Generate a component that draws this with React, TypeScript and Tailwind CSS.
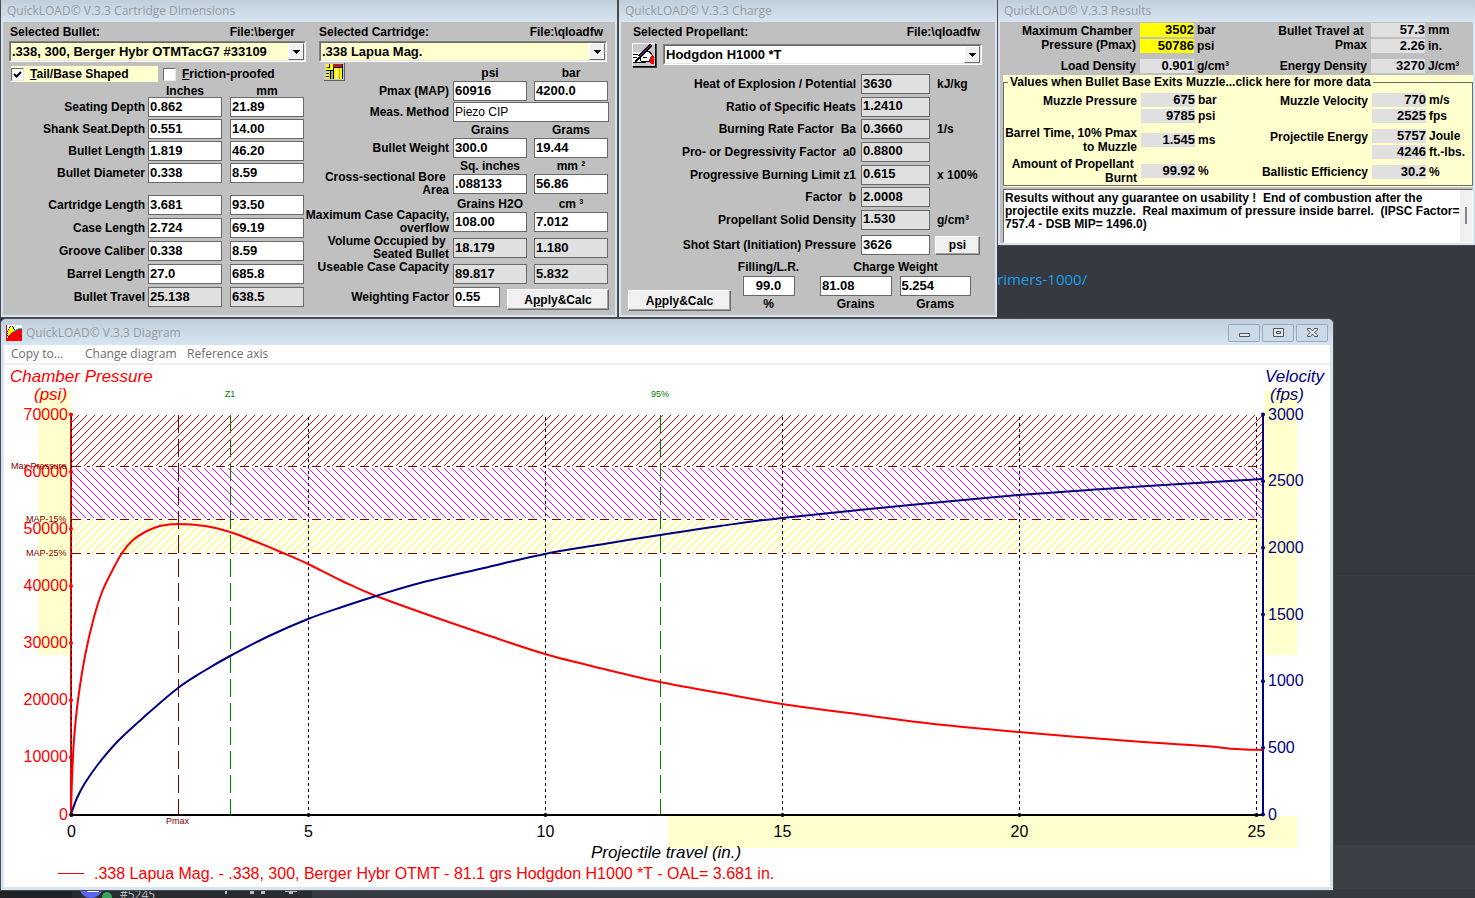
import { ReactNode, useState } from 'react';

const sans = 'font-["Liberation_Sans",Arial,sans-serif]';
const ui = 'font-["Open_Sans","Noto_Sans",sans-serif]';

interface FieldProps {
  id?: string;
  label?: string;
  value: string;
  locked?: boolean;
  className?: string;
}

const Field = ({ id, label, value, locked, className = '' }: FieldProps) => (
  <input
    id={id}
    type="text"
    aria-label={label}
    defaultValue={value}
    readOnly={locked}
    className={`h-5 w-full min-w-0 border border-[#696969] px-px pb-0.5 text-[13px] leading-4 font-bold outline-none ${
      locked ? 'bg-[#e0e0e0]' : 'bg-white'
    } ${className}`}
  />
);

const Window = ({
  title,
  className = '',
  children,
}: {
  title: string;
  className?: string;
  children: ReactNode;
}) => (
  <section className={`flex flex-col border border-t-0 border-[#4b4b4f] bg-[#d7e4f2] px-0.5 pb-0.5 ${className}`}>
    <h2
      className={`${ui} -mx-0.5 flex h-[22px] items-center bg-linear-to-b from-[#c0cedc] to-[#d7e4f1] px-1.5 text-xs font-normal text-[#969ba1]`}
    >
      {title}
    </h2>
    <div className="flex-1 bg-[#c0c0c0]">{children}</div>
  </section>
);

const Combo = ({ label, options, className }: { label: string; options: string[]; className: string }) => (
  <div className={`relative border border-r-white border-b-white border-t-[#808080] border-l-[#808080] ${className}`}>
    <select
      aria-label={label}
      className="block h-[19px] w-full appearance-none border border-[#696969] border-r-[#e3e3e3] border-b-[#e3e3e3] bg-transparent pr-5 pl-px text-[13px] leading-4 font-bold outline-none"
    >
      {options.map((option) => (
        <option key={option}>{option}</option>
      ))}
    </select>
    <span className="pointer-events-none absolute top-px right-px bottom-px flex w-4 items-center justify-center border border-white border-r-[#696969] border-b-[#696969] bg-[#f0f0f0]">
      <svg width="7" height="4" viewBox="0 0 7 4" shapeRendering="crispEdges">
        <path d="M0 0h7L3.500 4z" />
      </svg>
    </span>
  </div>
);

const Check = ({ id, checked, children }: { id: string; checked?: boolean; children: ReactNode }) => (
  <div className="flex items-center gap-1.5">
    <span className="grid size-[13px] place-items-center">
      <input
        id={id}
        type="checkbox"
        defaultChecked={checked}
        className="peer col-start-1 row-start-1 size-[13px] appearance-none border border-[#696969] border-r-[#e8e8e8] border-b-[#e8e8e8] bg-white"
      />
      <svg
        className="pointer-events-none invisible col-start-1 row-start-1 peer-checked:visible"
        width="9"
        height="9"
        viewBox="0 0 9 9"
      >
        <path d="M1 4l2.500 2.500L8 2" fill="none" stroke="#000" strokeWidth="2" />
      </svg>
    </span>
    <label htmlFor={id}>{children}</label>
  </div>
);

const PushButton = ({ className = '', children }: { className?: string; children: ReactNode }) => (
  <button
    type="button"
    className={`border border-white border-r-[#696969] border-b-[#696969] bg-[#f0f0f0] text-xs leading-4 font-bold shadow-[inset_-1px_-1px_0_#a0a0a0] ${className}`}
  >
    {children}
  </button>
);

/* ---------- Cartridge dimensions ---------- */

const bulletRows = [
  ['Seating Depth', '0.862', '21.89'],
  ['Shank Seat.Depth', '0.551', '14.00'],
  ['Bullet Length', '1.819', '46.20'],
  ['Bullet Diameter', '0.338', '8.59'],
];

const barrelRows = [
  ['Cartridge Length', '3.681', '93.50'],
  ['Case Length', '2.724', '69.19'],
  ['Groove Caliber', '0.338', '8.59'],
  ['Barrel Length', '27.0', '685.8'],
  ['Bullet Travel', '25.138', '638.5'],
];

const DimensionRow = ({ row }: { row: string[] }) => {
  const [label, inches, mm] = row;
  const id = label.toLowerCase().replace(/\W+/g, '-');
  const locked = label === 'Bullet Travel';
  return (
    <div className="grid grid-cols-[136px_74px_74px] items-center gap-x-2">
      <label htmlFor={id} className="-mr-[5px] text-right">
        {label}
      </label>
      <Field id={id} value={inches} locked={locked} />
      <Field label={`${label} mm`} value={mm} locked={locked} />
    </div>
  );
};

const Units = ({ left, right, icon }: { left: string; right: string; icon?: ReactNode }) => (
  <div className="grid h-4 grid-cols-[minmax(0,1fr)_74px_74px] items-center gap-x-[7px] pr-px text-center whitespace-pre">
    <div className="h-4 pl-[5px] text-left">{icon}</div>
    <span>{left}</span>
    <span>{right}</span>
  </div>
);

const CaseRow = ({
  id,
  label,
  values,
  locked,
  className = '',
}: {
  id: string;
  label: string;
  values: string[];
  locked?: boolean;
  className?: string;
}) => (
  <div
    className={`grid grid-cols-[minmax(0,1fr)_74px_74px] grid-rows-[20px] items-center gap-x-[7px] pr-px ${className}`}
  >
    <label htmlFor={id} className="-mr-[3px] flex justify-end text-right leading-[13px] whitespace-pre">
      {label}
    </label>
    <Field id={id} value={values[0]} locked={locked} />
    <Field label={`${label} metric`} value={values[1]} locked={locked} />
  </div>
);

const CartridgeIcon = () => (
  <svg width="21" height="18" viewBox="0 0 21 18" shapeRendering="crispEdges">
    <path d="M0 0h21v18H0z" fill="#c8c8c8" />
    <path d="M0 17.500h20.500V0" fill="none" stroke="#606060" />
    <path d="M2 1h7v6H2zM2 9h3v7H2zM10 5h8v11h-8z" fill="#ff0" />
    <path d="M9 1h9v3H9z" fill="#b02030" />
    <path d="M5 1v3M3 4h3M9 4.500h9M2 7.500h8M9.500 5v11M18.500 1v15M2 10.500h3M2 13.500h3M6.500 8v8" fill="none" stroke="#000" />
    <path d="M7 8h2v8H7z" fill="#a0a0a0" />
    <path d="M12 6h1v10h-1z" fill="#fff" />
    <path d="M15 5h1v11h-1z" fill="#d0a000" />
  </svg>
);

const CartridgeWindow = () => (
  <Window title="QuickLOAD© V.3.3 Cartridge Dimensions" className="w-[618px] shrink-0">
    <div className="flex gap-[13px] pt-px pr-1.5 pl-1.5">
      <div className="w-[297px]">
        <div className="flex h-[18px] items-center justify-between pr-[11px] pl-px">
          <span>Selected Bullet:</span>
          <span>File:\berger</span>
        </div>
        <Combo
          label="Selected Bullet"
          options={['.338, 300, Berger Hybr OTMTacG7 #33109']}
          className="bg-[#ffffce]"
        />
        <div className="mt-1 flex h-4 gap-[5px] pl-0.5">
          <div className="flex w-[147px] items-center bg-[#ffffce]">
            <Check id="tail" checked>
              <u>T</u>ail/Base Shaped
            </Check>
          </div>
          <Check id="friction">
            <u>F</u>riction-proofed
          </Check>
        </div>
        <div className="-ml-[5px]">
          <div className="mt-px grid h-[14px] grid-cols-[136px_74px_74px] items-center gap-x-2 text-center">
            <span />
            <span>Inches</span>
            <span>mm</span>
          </div>
          <div className="space-y-0.5">
            {bulletRows.map((row) => (
              <DimensionRow key={row[0]} row={row} />
            ))}
          </div>
          <div className="mt-3 space-y-[3px]">
            {barrelRows.map((row) => (
              <DimensionRow key={row[0]} row={row} />
            ))}
          </div>
        </div>
      </div>

      <div className="min-w-0 flex-1">
        <div className="flex h-[18px] items-center justify-between pr-1.5">
          <span>Selected Cartridge:</span>
          <span>File:\qloadfw</span>
        </div>
        <Combo label="Selected Cartridge" options={['.338 Lapua Mag.']} className="mr-0.5 bg-[#ffffce]" />
        <div className="pt-[3px]">
          <Units
            left="psi"
            right="bar"
            icon={
              <button type="button" aria-label="Cartridge drawing" className="-mt-0.5 block">
                <CartridgeIcon />
              </button>
            }
          />
        </div>
        <CaseRow id="pmax" label="Pmax (MAP)" values={['60916', '4200.0']} />
        <div className="mt-px grid grid-cols-[1fr_156px] items-center gap-x-1">
          <label htmlFor="method" className="text-right">
            Meas. Method
          </label>
          <input
            id="method"
            type="text"
            defaultValue="Piezo CIP"
            className="h-5 w-full border border-[#696969] bg-white px-px text-xs font-normal outline-none"
          />
        </div>
        <Units left="Grains" right="Grams" />
        <CaseRow id="weight" label="Bullet Weight" values={['300.0', '19.44']} />
        <Units left="Sq. inches" right="mm ²" />
        <CaseRow id="bore" label={'Cross-sectional Bore \nArea'} values={['.088133', '56.86']} />
        <div className="pt-0.5">
          <Units left="Grains H2O" right="cm ³" />
        </div>
        <CaseRow id="capacity" label={'Maximum Case Capacity,\noverflow'} values={['108.00', '7.012']} />
        <CaseRow
          id="volume"
          label={'Volume Occupied by \nSeated Bullet'}
          values={['18.179', '1.180']}
          locked
          className="mt-1.5"
        />
        <CaseRow
          id="useable"
          label={'Useable Case Capacity\n '}
          values={['89.817', '5.832']}
          locked
          className="mt-1.5"
        />
        <div className="mt-[3px] grid grid-cols-[minmax(0,1fr)_47px_102px] items-start gap-x-[7px]">
          <label htmlFor="factor" className="-mr-[3px] text-right leading-5">
            Weighting Factor
          </label>
          <Field id="factor" value="0.55" />
          <PushButton className="mt-0.5 h-[21px]">
            A<u>p</u>ply&amp;Calc
          </PushButton>
        </div>
      </div>
    </div>
  </Window>
);

/* ---------- Charge ---------- */

const propellantRows = [
  ['Heat of Explosion / Potential', '3630', 'kJ/kg'],
  ['Ratio of Specific Heats', '1.2410', ''],
  ['Burning Rate Factor  Ba', '0.3660', '1/s'],
  ['Pro- or Degressivity Factor  a0', '0.8800', ''],
  ['Progressive Burning Limit z1', '0.615', 'x 100%'],
  ['Factor  b', '2.0008', ''],
  ['Propellant Solid Density', '1.530', 'g/cm³'],
];

const NotesIcon = () => (
  <svg width="22" height="22" viewBox="0 0 22 22" shapeRendering="crispEdges">
    <path d="M0 0h22v22H0z" fill="#c8c8c8" />
    <path d="M0 8h8v10H0z" fill="#fff" />
    <path d="M6 12l5-5h5l3 4v6H8z" fill="#fff" stroke="#000" />
    <path d="M18 12h3v8h-3l-2-4z" fill="#f00000" />
    <path d="M0 10.500h5M0 13.500h4M0 18.500h13M10 13.500h4" fill="none" stroke="#000" />
    <path d="M2 18l5-5" stroke="#000" strokeWidth="2" />
    <path d="M6 13L18 1" stroke="#000" strokeWidth="3" />
    <path d="M6 13L18 1" stroke="#c000c0" strokeWidth="1" />
  </svg>
);

const ChargeWindow = () => (
  <Window title="QuickLOAD© V.3.3 Charge" className="w-[379px] shrink-0 border-r-0">
    <div className="pt-px pb-[3px] pl-[7px]">
      <div className="flex h-[18px] items-center justify-between pr-[15px] pl-[5px]">
        <span>Selected Propellant:</span>
        <span>File:\qloadfw</span>
      </div>
      <div className="mt-0.5 flex items-start gap-[7px] pr-[13px] pl-1">
        <button
          type="button"
          aria-label="Propellant notes"
          className="border border-white border-r-black border-b-black shadow-[1px_1px_0_#404040]"
        >
          <NotesIcon />
        </button>
        <Combo label="Selected Propellant" options={['Hodgdon H1000 *T']} className="mt-px flex-1 bg-white" />
      </div>
      <div className="mt-[7px] flex h-[156px] flex-col justify-between">
        {propellantRows.map(([label, value, unit], i) => (
          <div key={label} className="grid grid-cols-[228px_69px_1fr] items-center gap-x-[5px] whitespace-pre">
            <label htmlFor={`prop-${i}`} className="text-right">
              {label}
            </label>
            <Field id={`prop-${i}`} value={value} locked />
            <span className="pl-0.5">{unit}</span>
          </div>
        ))}
      </div>
      <div className="mt-[5px] grid grid-cols-[228px_69px_45px] items-center gap-x-[5px]">
        <label htmlFor="shot-start" className="text-right">
          Shot Start (Initiation) Pressure
        </label>
        <Field id="shot-start" value="3626" />
        <PushButton className="h-[19px]">psi</PushButton>
      </div>
      <div className="mt-1 flex">
        <PushButton className="mt-[31px] h-[21px] w-[103px]">
          A<u>p</u>ply&amp;Calc
        </PushButton>
        <div className="flex w-[75px] flex-col items-center">
          <label htmlFor="filling" className="leading-[17px]">
            Filling/L.R.
          </label>
          <div className="w-[52px]">
            <Field id="filling" value="99.0" className="text-center" />
          </div>
          <span className="leading-4">%</span>
        </div>
        <div className="ml-3.5 w-[151px] text-center">
          <div className="leading-[17px]">Charge Weight</div>
          <div className="grid grid-cols-2 gap-x-2">
            <Field id="charge-grains" value="81.08" />
            <Field id="charge-grams" value="5.254" />
            <label htmlFor="charge-grains" className="leading-4">
              Grains
            </label>
            <label htmlFor="charge-grams" className="leading-4">
              Grams
            </label>
          </div>
        </div>
      </div>
    </div>
  </Window>
);

/* ---------- Results ---------- */

const Metric = ({
  label,
  readings,
  highlight,
}: {
  label: string;
  readings: string[][];
  highlight?: boolean;
}) => (
  <div className={`flex justify-end gap-1 ${readings.length > 1 ? 'items-start' : 'items-center'}`}>
    <span className={`flex-1 text-right leading-[14px] whitespace-pre ${readings.length > 1 ? 'pt-px' : ''}`}>
      {label}
    </span>
    <div className="space-y-0.5">
      {readings.map(([value, unit]) => (
        <div key={unit} className="flex h-3.5 gap-[3px]">
          <output
            className={`w-[54px] text-right text-[13px] leading-3.5 ${highlight ? 'bg-[#ffff00]' : 'bg-[#e0e0e0]'}`}
          >
            {value}
          </output>
          <span className="w-[41px] leading-3.5 whitespace-nowrap">{unit}</span>
        </div>
      ))}
    </div>
  </div>
);

const notice =
  'Results without any guarantee on usability !  End of combustion after the\n' +
  'projectile exits muzzle.  Real maximum of pressure inside barrel.  (IPSC Factor=\n' +
  '757.4 - DSB MIP= 1496.0)';

const ResultsWindow = () => (
  <Window title="QuickLOAD© V.3.3 Results" className="border-r-0">
    <div className="pl-[3px]">
      <div className="flex pt-px pb-0.5">
        <div className="w-[235px] space-y-1.5">
          <Metric
            label={'Maximum Chamber \nPressure (Pmax)'}
            readings={[
              ['3502', 'bar'],
              ['50786', 'psi'],
            ]}
            highlight
          />
          <Metric label="Load Density" readings={[['0.901', 'g/cm³']]} />
        </div>
        <div className="flex-1 space-y-1.5 pr-1">
          <Metric
            label={'Bullet Travel at \nPmax'}
            readings={[
              ['57.3', 'mm'],
              ['2.26', 'in.'],
            ]}
          />
          <Metric label="Energy Density" readings={[['3270', 'J/cm³']]} />
        </div>
      </div>
      <div className="bg-[#ffffce] pb-px">
        <fieldset className="flex border border-[#696969] pt-1">
          <legend className="ml-1 px-0.5">
            <button type="button" className="block text-xs leading-3.5 font-bold">
              Values when Bullet Base Exits Muzzle...click here for more data
            </button>
          </legend>
          <div className="w-[235px] space-y-[3px]">
            <Metric
              label="Muzzle Pressure"
              readings={[
                ['675', 'bar'],
                ['9785', 'psi'],
              ]}
            />
            <Metric label={'Barrel Time, 10% Pmax\nto Muzzle'} readings={[['1.545', 'ms']]} />
            <Metric label={'Amount of Propellant \nBurnt'} readings={[['99.92', '%']]} />
          </div>
          <div className="flex-1 space-y-1.5 pr-0.5">
            <Metric
              label="Muzzle Velocity"
              readings={[
                ['770', 'm/s'],
                ['2525', 'fps'],
              ]}
            />
            <Metric
              label="Projectile Energy"
              readings={[
                ['5757', 'Joule'],
                ['4246', 'ft.-lbs.'],
              ]}
            />
            <Metric label="Ballistic Efficiency" readings={[['30.2', '%']]} />
          </div>
        </fieldset>
      </div>
      <div className="mt-0.5 flex h-[54px] border border-[#696969] border-r-white border-b-white bg-white">
        <textarea
          aria-label="Notice"
          readOnly
          defaultValue={notice}
          className="min-w-0 flex-1 resize-none overflow-hidden py-0.5 pl-px text-xs leading-[13px] font-bold whitespace-pre outline-none"
        />
        <div className="flex w-3 justify-center bg-[#f0f0f0] pt-[17px]">
          <div className="h-[17px] w-0.5 bg-[#858585]" />
        </div>
      </div>
    </div>
  </Window>
);

/* ---------- Diagram ---------- */

const X0 = 67.5;
const Y0 = 449.5;
const xAt = (inch: number) => X0 + inch * 47.4;
const psiAt = (psi: number) => Y0 - (psi * 400) / 70000;
const fpsAt = (fps: number) => Y0 - (fps * 400) / 3000;

const pressure = [
  [67, 449], [68, 415], [70, 375], [74, 335], [81, 291], [90, 252], [98, 227], [106, 210], [118, 188],
  [129, 175], [143, 166], [156, 161], [174, 159], [201, 161], [226, 167], [250, 176], [279, 188], [304, 199],
  [338, 216], [372, 231], [436, 254], [480, 269], [541, 289], [600, 304], [656, 317], [716, 328], [778, 339],
  [860, 350], [930, 359], [1015, 367], [1126, 376], [1200, 381], [1232, 384], [1259, 385],
];

const velocity = [
  [67, 449], [73, 433], [81, 418], [95, 398], [115, 375], [140, 352], [174, 323], [200, 306], [226, 291],
  [265, 271], [304, 254], [338, 242], [372, 231], [416, 218], [480, 203], [541, 189], [600, 179], [656, 170],
  [716, 161], [778, 153], [896, 141], [1015, 130], [1100, 124], [1176, 119], [1259, 114],
];

// Catmull-Rom spline through the sampled points
const curve = (pts: number[][]) =>
  pts.slice(0, -1).reduce((d, p, i) => {
    const a = pts[i - 1] ?? p;
    const q = pts[i + 1];
    const b = pts[i + 2] ?? q;
    return `${d}C${p[0] + (q[0] - a[0]) / 6} ${p[1] + (q[1] - a[1]) / 6} ${q[0] - (b[0] - p[0]) / 6} ${
      q[1] - (b[1] - p[1]) / 6
    } ${q[0]} ${q[1]}`;
  }, `M${pts[0][0]} ${pts[0][1]}`);

// 45° hatching between two heights, clipped to the plot's left and right edges
const hatch = (top: number, bottom: number, rising: boolean) => {
  const h = bottom - top;
  let d = '';
  for (let x = 72 - Math.ceil(h / 8) * 8; x < 1258; x += 8) {
    const from = Math.max(0, 68 - x);
    const to = Math.min(h, 1258 - x);
    if (to <= from) continue;
    d += rising
      ? `M${x + from} ${bottom - from}L${x + to} ${bottom - to}`
      : `M${x + from} ${top + from}L${x + to} ${top + to}`;
  }
  return d;
};

const Diagram = () => (
  <svg viewBox="0 0 1326 522" className={`${sans} block h-auto w-full bg-white text-[16px]`}>
    <g fill="#ffffce">
      <path d="M34 26h33v264H34zM1260 26h33v264h-33zM664 451h629v32H664z" />
    </g>

    <g shapeRendering="crispEdges">
      <path d={hatch(50, 101, true)} stroke="#f00000" />
      <path d={hatch(103, 153, false)} stroke="#ff00ff" />
      <path d={hatch(155, 188, true)} stroke="#ffff00" />
      <g stroke="#800000" strokeDasharray="9 6 3 6">
        <path d="M68 101.500H1252M68 154.500H1252M68 188.500H1252" />
      </g>
      <g stroke="#000" strokeDasharray="3 3">
        {[5, 10, 15, 20, 25].map((inch) => (
          <path key={inch} d={`M${xAt(inch)} 52V449`} />
        ))}
      </g>
      <path d="M174.500 50V449" stroke="#800000" strokeDasharray="18 6" />
      <path d="M226.500 50V449M656.500 50V449" stroke="#008000" strokeDasharray="18 6" />
      <path d="M67 49V450" stroke="#f00" strokeWidth="2" />
      <path d="M67.500 52V449" stroke="#000" strokeDasharray="3 3" />
      <path d="M67 450H1260" stroke="#000" strokeWidth="2" />
      <path d="M1259 49V450" stroke="#000080" strokeWidth="2" />
    </g>

    <path d={curve(pressure)} fill="none" stroke="#f00" strokeWidth="2" />
    <path d={curve(velocity)} fill="none" stroke="#000080" strokeWidth="2" />

    <g fill="#f00" textAnchor="end">
      {[0, 10000, 20000, 30000, 40000, 50000, 60000, 70000].map((psi) => (
        <g key={psi}>
          <text x="64" y={psiAt(psi) + 5}>
            {psi}
          </text>
          <circle cx="67" cy={psiAt(psi)} r="2" />
        </g>
      ))}
    </g>
    <g fill="#000080">
      {[0, 500, 1000, 1500, 2000, 2500, 3000].map((fps) => (
        <g key={fps}>
          <text x="1264" y={fpsAt(fps) + 5}>
            {fps}
          </text>
          <circle cx="1259" cy={fpsAt(fps)} r="2" />
        </g>
      ))}
    </g>
    <g textAnchor="middle">
      {[0, 5, 10, 15, 20, 25].map((inch) => (
        <g key={inch}>
          <text x={xAt(inch)} y="472">
            {inch}
          </text>
          <circle cx={xAt(inch)} cy="450" r="2" />
        </g>
      ))}
    </g>

    <g fontStyle="italic" fontSize="17">
      <g fill="#f00">
        <text x="6" y="17">Chamber Pressure</text>
        <text x="30" y="35">(psi)</text>
      </g>
      <g fill="#000080">
        <text x="1261" y="17">Velocity</text>
        <text x="1266" y="35">(fps)</text>
      </g>
      <text x="587" y="493">Projectile travel (in.)</text>
    </g>

    <g fontSize="9">
      <g fill="#800000">
        <text x="7" y="104">Max Pressure</text>
        <text x="22" y="157">MAP-15%</text>
        <text x="22" y="191">MAP-25%</text>
        <text x="162" y="459">Pmax</text>
      </g>
      <g fill="#008000" textAnchor="middle">
        <text x="226" y="32">Z1</text>
        <text x="656" y="32">95%</text>
      </g>
    </g>

    <path d="M54 508.500H80" stroke="#f00" shapeRendering="crispEdges" />
    <text x="90" y="514" fill="#f00">
      .338 Lapua Mag. - .338, 300, Berger Hybr OTMT - 81.1 grs Hodgdon H1000 *T - OAL= 3.681 in.
    </text>
  </svg>
);

const captionButtons = [
  { label: 'Minimize', shape: <path d="M3.500 6.500h10v3h-10z" /> },
  { label: 'Restore', shape: <path d="M3.500 1.500h10v8h-10zM6.500 4.500h4v2h-4z" /> },
  {
    label: 'Close',
    shape: <path d="M3.500 1.500h3l2 2.500 2-2.500h3v1.500l-3 2.500 3 2.500v1.500h-3l-2-2.500-2 2.500h-3v-1.500l3-2.500-3-2.500z" />,
  },
];

const DiagramWindow = () => {
  const [menu, setMenu] = useState('');
  return (
    <section className="min-w-0 flex-1 rounded-t-md border border-[#4b4b4f] bg-[#d7e4f2] pb-[3px]">
      <header className="flex h-[26px] items-center rounded-t-md bg-linear-to-b from-[#c0cedc] to-[#d7e4f1] px-[5px] pt-px">
        <svg width="16" height="16" viewBox="0 0 16 16" shapeRendering="crispEdges">
          <path d="M0 0h16v16H0z" fill="#fff" />
          <path d="M1 11C2 5 3 1 5 1s3 4 5 6l-4 4z" fill="#ff0" stroke="#000" strokeDasharray="1 1" />
          <path d="M1 14C4 8 9 4 16 3v13H1z" fill="#f00" />
          <path d="M7 7c3-2 6-4 9-4" fill="none" stroke="#0cc" />
          <path d="M.5 0v15.500H16" fill="none" stroke="#f00" />
          <path d="M13 10l2 2" stroke="#000" />
        </svg>
        <h2 className={`${ui} flex-1 pl-1 text-xs font-normal text-[#969ba1]`}>QuickLOAD© V.3.3 Diagram</h2>
        <div className="flex gap-0.5">
          {captionButtons.map(({ label, shape }) => (
            <button
              key={label}
              type="button"
              aria-label={label}
              className="flex h-[18px] w-8 items-center justify-center rounded-xs border border-[#9aa9bb] bg-[#ccd9e7]"
            >
              <svg width="17" height="11" viewBox="0 0 17 11" fill="#e8e8e8" stroke="#50545c">
                {shape}
              </svg>
            </button>
          ))}
        </div>
      </header>
      <div className="mx-[3px] bg-white">
        <nav
          className={`${ui} flex h-5 items-center border-b-2 border-[#f0f0f0] pl-[7px] text-xs text-[#6d6d6d]`}
        >
          {['Copy to...', 'Change diagram', 'Reference axis'].map((item, i) => (
            <button
              key={item}
              type="button"
              onClick={() => setMenu(item)}
              aria-pressed={menu === item}
              className={`text-left whitespace-nowrap ${i === 0 ? 'w-[74px]' : 'w-[102px]'}`}
            >
              {item}
            </button>
          ))}
        </nav>
        <Diagram />
      </div>
    </section>
  );
};

export default function App() {
  return (
    <main className={`${sans} min-h-screen overflow-hidden bg-[#36393f] text-xs leading-4 font-bold text-black`}>
      <div className="flex">
        <CartridgeWindow />
        <ChargeWindow />
        <div className="min-w-0 flex-1">
          <ResultsWindow />
          <a href="#primers" className={`${ui} mt-[21px] block text-[15px] leading-6 font-normal text-[#1a9fea]`}>
            rimers-1000/
          </a>
        </div>
      </div>
      <div className="flex font-normal">
        <DiagramWindow />
        <aside className="flex w-[141px] shrink-0 flex-col">
          <div className="h-64 border-b border-[#303338]" />
          <div className="flex-1" />
          <div className="mb-0.5 h-[44px] bg-[#3c3f45]" />
        </aside>
      </div>
      <footer className={`${ui} flex h-[7px] overflow-hidden font-normal text-[#b9bbbe]`}>
        <div className="w-[72px] bg-[#202225]" />
        <div className="flex w-60 items-start bg-[#292b2f] pl-2">
          <svg width="34" height="7" viewBox="0 0 34 7">
            <circle cx="11" cy="-5" r="12" fill="#5865f2" />
            <path d="M7 0h12v1H7z" fill="#fff" />
            <circle cx="27" cy="6" r="5" fill="#3ba55d" />
          </svg>
          <span className="-mt-1 pl-1.5 text-xs leading-4">#5245</span>
          <svg width="80" height="7" viewBox="0 0 80 7" fill="#b9bbbe" className="ml-16">
            <path d="M6 0h2v3H6zM31 0h4v3h-4zM42 0h4v3h-4zM66 0h12v1H66zM70 1h4v2h-4z" />
          </svg>
        </div>
      </footer>
    </main>
  );
}
